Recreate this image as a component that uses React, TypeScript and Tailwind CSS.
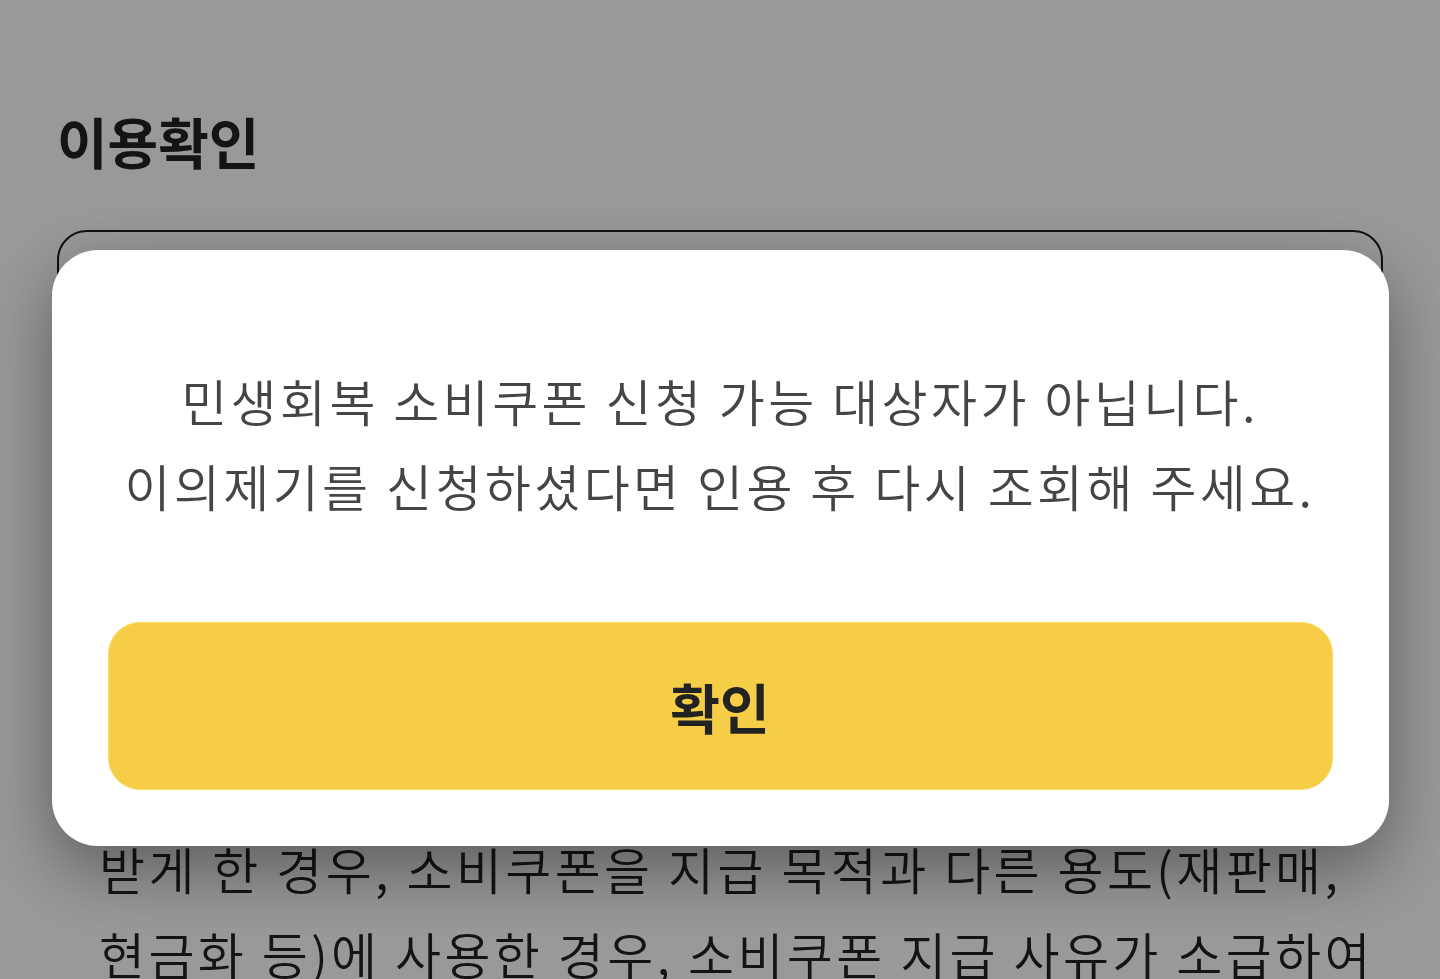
import React from 'react';

const noticeLines = [
  '거짓이나 그 밖의 부정한 방법으로 소비쿠폰을',
  '지급받거나 타인에게 부정하게 지급',
  '받게 한 경우, 소비쿠폰을 지급 목적과 다른 용도(재판매,',
  '현금화 등)에 사용한 경우, 소비쿠폰 지급 사유가 소급하여',
  '소멸한 경우 등에는 환수 대상이 됩니다.',
];

const App: React.FC = () => {
  return (
    <div
      className="relative min-h-screen overflow-hidden bg-white"
      style={{ fontFamily: '"Noto Sans CJK KR", "Noto Sans", sans-serif' }}
    >
      {/* page underneath the dialog */}
      <div className="px-[57px] pt-[100px]">
        <h1 className="text-[55px] font-bold leading-[80px] text-[#222]">이용확인</h1>
        <div className="mt-[50px] h-[300px] rounded-[30px] border-2 border-[#1c1c1c]" />
        <div className="px-[42px] pt-[126px] pb-10">
          {noticeLines.map((line, i) => (
            <div key={i} className="h-[85px] whitespace-nowrap text-[50px] font-[350] leading-[85px] tracking-[3.4px] text-[#222]">
              {line}
            </div>
          ))}
        </div>
      </div>

      {/* dimmed overlay + alert dialog */}
      <div className="fixed inset-0 flex items-start justify-center bg-black/40 pt-[250px]">
        <div className="w-[1337px] rounded-[46px] bg-white px-[56px] pt-[108px] pb-[56px] shadow-[0_24px_70px_rgba(0,0,0,0.4)]">
          <p className="text-center text-[50px] font-[350] leading-[85px] tracking-[3.4px] text-[#454545]">
            민생회복 소비쿠폰 신청 가능 대상자가 아닙니다.
            <br />
            이의제기를 신청하셨다면 인용 후 다시 조회해 주세요.
          </p>
          <button className="mt-[94px] flex h-[168px] w-full items-center justify-center rounded-[32px] border border-[#f7dc62] bg-[#f5cd47] text-[54px] font-bold text-[#222]">
            확인
          </button>
        </div>
      </div>
    </div>
  );
};

export default App;
